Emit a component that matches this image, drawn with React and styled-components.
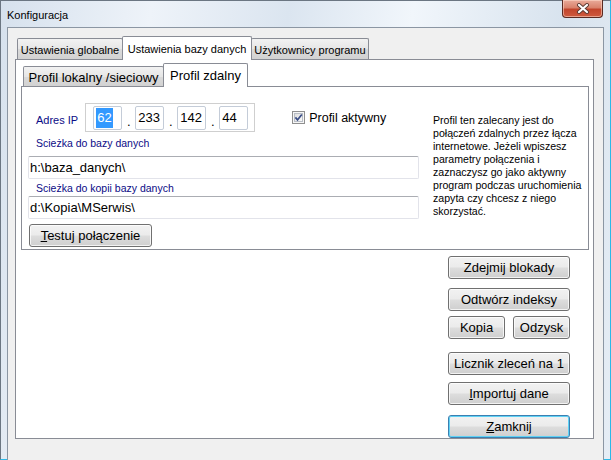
import React from "react";
import styled, { createGlobalStyle } from "styled-components";

const GlobalStyle = createGlobalStyle`
  html, body {
    margin: 0;
    padding: 0;
    width: 611px;
    height: 460px;
    overflow: hidden;
  }
  body {
    font-family: "Liberation Sans", Arial, sans-serif;
    color: #000;
  }
  * {
    box-sizing: border-box;
  }
`;

const Window = styled.div`
  width: 611px;
  height: 460px;
  display: flex;
  flex-direction: column;
  border: 1px solid #6b7682;
  border-right-color: #2bb9e8;
  border-bottom-color: #2bb9e8;
  background: linear-gradient(
    100deg,
    #d6e1ed 0%,
    #eef3f9 22%,
    #dbe5f0 42%,
    #f1f6fb 60%,
    #d8e3ee 82%,
    #e6edf5 100%
  );
`;

const TitleBar = styled.div`
  height: 26px;
  flex: none;
  display: flex;
  justify-content: space-between;
  align-items: flex-start;
  padding: 0 7px 0 6px;
`;

const Title = styled.span`
  font-size: 11px;
  line-height: 26px;
  margin-top: 1px;
`;

const CloseButton = styled.div`
  width: 41px;
  height: 18px;
  margin-top: -1px;
  border: 1px solid #5a2a22;
  border-top: none;
  border-radius: 0 0 4px 4px;
  background: linear-gradient(#e9ab9a 0%, #d9826c 45%, #c2452c 55%, #cf5a3e 100%);
  box-shadow: inset 0 0 0 1px rgba(255, 220, 205, 0.55);
  display: flex;
  align-items: center;
  justify-content: center;
`;

const Client = styled.div`
  flex: 1;
  margin: 0 6px 6px 6px;
  border: 1px solid #8b96a3;
  background: #f0f0f0;
  padding: 8px 9px 24px 7px;
  display: flex;
  flex-direction: column;
`;

const TabStrip = styled.div`
  height: 23px;
  flex: none;
  display: flex;
  align-items: flex-end;
  padding-left: 2px;
`;

const Tab = styled.div`
  position: relative;
  width: ${(p) => p.$w}px;
  height: ${(p) => (p.$active ? 24 : p.$h)}px;
  margin-left: ${(p) => (p.$first ? 0 : -1)}px;
  margin-bottom: ${(p) => (p.$active ? -1 : 0)}px;
  z-index: ${(p) => (p.$active ? 1 : 0)};
  border: 1px solid #898c95;
  border-bottom: none;
  border-radius: 2px 2px 0 0;
  background: ${(p) =>
    p.$active ? "#fff" : "linear-gradient(#f2f2f2 0%, #e6e6e6 50%, #dadada 52%, #d2d2d2 100%)"};
  display: flex;
  align-items: center;
  justify-content: center;
  padding-top: ${(p) => (p.$active ? 0 : 1)}px;
  font-size: ${(p) => p.$size}px;
  white-space: nowrap;
`;

const OuterPage = styled.div`
  flex: 1;
  border: 1px solid #898c95;
  background: #fff;
  padding: 3px 4px 0 5px;
  display: flex;
  flex-direction: column;
`;

const InnerPage = styled.div`
  border: 1px solid #898c95;
  background: #fff;
  padding: 16px 0 2px 6px;
  display: flex;
  align-items: flex-start;
`;

const LeftColumn = styled.div`
  width: 391px;
  flex: none;
  display: flex;
  flex-direction: column;
`;

const IpRow = styled.div`
  height: 29px;
  display: flex;
  align-items: center;
`;

const NavyLabel = styled.div`
  color: #0b0b86;
  font-size: ${(p) => p.$size || 11}px;
  line-height: 13px;
  height: 13px;
  margin-left: 8px;
  margin-top: ${(p) => p.$mt || 0}px;
  white-space: nowrap;
`;

const IpBox = styled.div`
  width: 170px;
  height: 29px;
  margin-left: 7px;
  border: 1px solid #cfcfcf;
  display: flex;
  align-items: center;
  padding-left: 7px;
`;

const IpField = styled.div`
  width: 29px;
  height: 24px;
  border: 1px solid #c4ccd8;
  border-radius: 2px;
  font-size: 13px;
  line-height: 22px;
  padding-left: 2px;
`;

const Selected = styled.span`
  display: inline-block;
  background: #3399ff;
  color: #fff;
  line-height: 20px;
  padding: 0 1px;
`;

const IpDot = styled.span`
  width: 13px;
  text-align: center;
  font-size: 13px;
  align-self: flex-end;
  line-height: 19px;
`;

const CheckLabel = styled.label`
  display: flex;
  align-items: center;
  gap: 4px;
  margin-left: 37px;
  font-size: 12.5px;
`;

const TextInput = styled.div`
  height: 23px;
  margin-top: ${(p) => p.$mt}px;
  border: 1px solid #e2e3ea;
  border-top-color: #abadb3;
  border-radius: 2px;
  font-size: 13px;
  line-height: 21px;
  padding-left: 1px;
  white-space: nowrap;
`;

const Button = styled.div`
  height: 23px;
  width: ${(p) => (p.$w ? `${p.$w}px` : "auto")};
  margin-top: ${(p) => p.$mt || 0}px;
  margin-left: ${(p) => p.$ml || 0}px;
  border: 1px solid ${(p) => (p.$focused ? "#3c7fb1" : "#707070")};
  border-radius: 3px;
  background: linear-gradient(#f2f2f2 0%, #ebebeb 48%, #dddddd 52%, #cfcfcf 100%);
  box-shadow: inset 0 0 0 1px ${(p) => (p.$focused ? "#5fd2f5" : "rgba(255, 255, 255, 0.75)")};
  font-size: 13px;
  line-height: 21px;
  text-align: center;
  white-space: nowrap;
  flex: none;
`;

const Description = styled.div`
  margin: 11px 0 0 14px;
  display: flex;
  flex-direction: column;
  align-items: flex-start;
  text-align: left;
`;

const DescLine = styled.div`
  font-size: 10.6px;
  line-height: 13px;
  white-space: nowrap;
`;

const ButtonColumn = styled.div`
  width: 122px;
  align-self: flex-end;
  margin: 6px 19px 0 0;
  display: flex;
  flex-direction: column;
`;

const ButtonPair = styled.div`
  display: flex;
  justify-content: space-between;
  margin-top: ${(p) => p.$mt}px;
`;

const descriptionLines = [
  "Profil ten zalecany jest do",
  "połączeń zdalnych przez łącza",
  "internetowe. Jeżeli wpiszesz",
  "parametry połączenia i",
  "zaznaczysz go jako aktywny",
  "program podczas uruchomienia",
  "zapyta czy chcesz z niego",
  "skorzystać.",
];

const CheckIcon = () => (
  <svg width="13" height="13" viewBox="0 0 13 13">
    <defs>
      <linearGradient id="cb" x1="0" y1="0" x2="1" y2="1">
        <stop offset="0" stopColor="#dcdcdc" />
        <stop offset="1" stopColor="#fbfbfb" />
      </linearGradient>
    </defs>
    <rect x="0.5" y="0.5" width="12" height="12" fill="#f6f6f6" stroke="#8f8f8f" />
    <rect x="2.5" y="2.5" width="8" height="8" fill="url(#cb)" stroke="#b9bec6" />
    <path d="M3.4 6.4 L5.5 8.9 L9.8 3.4" stroke="#3a4d86" strokeWidth="1.7" fill="none" />
  </svg>
);

const CloseIcon = () => (
  <svg width="14" height="11" viewBox="0 0 14 11">
    <path d="M3 2 L11 9 M11 2 L3 9" stroke="#5b3a33" strokeWidth="4" strokeLinecap="round" />
    <path d="M3 2 L11 9 M11 2 L3 9" stroke="#fff" strokeWidth="2.2" strokeLinecap="round" />
  </svg>
);

const App = () => {
  return (
    <>
      <GlobalStyle />
      <Window>
        <TitleBar>
          <Title>Konfiguracja</Title>
          <CloseButton>
            <CloseIcon />
          </CloseButton>
        </TitleBar>
        <Client>
          <TabStrip>
            <Tab $first $w={106} $h={21} $size={11}>
              Ustawienia globalne
            </Tab>
            <Tab $active $w={130} $size={11}>
              Ustawienia bazy danych
            </Tab>
            <Tab $w={118} $h={21} $size={11}>
              Użytkownicy programu
            </Tab>
          </TabStrip>
          <OuterPage>
            <TabStrip>
              <Tab $first $w={141} $h={20} $size={13}>
                Profil lokalny /sieciowy
              </Tab>
              <Tab $active $w={85} $size={13}>
                Profil zdalny
              </Tab>
            </TabStrip>
            <InnerPage>
              <LeftColumn>
                <IpRow>
                  <NavyLabel $size={11} $mt={6}>
                    Adres IP
                  </NavyLabel>
                  <IpBox>
                    <IpField>
                      <Selected>62</Selected>
                    </IpField>
                    <IpDot>.</IpDot>
                    <IpField>233</IpField>
                    <IpDot>.</IpDot>
                    <IpField>142</IpField>
                    <IpDot>.</IpDot>
                    <IpField>44</IpField>
                  </IpBox>
                  <CheckLabel>
                    <CheckIcon />
                    Profil aktywny
                  </CheckLabel>
                </IpRow>
                <NavyLabel $size={10.5} $mt={5}>
                  Scieżka do bazy danych
                </NavyLabel>
                <TextInput $mt={6}>h:\baza_danych\</TextInput>
                <NavyLabel $size={10.5} $mt={3}>
                  Scieżka do kopii bazy danych
                </NavyLabel>
                <TextInput $mt={1}>d:\Kopia\MSerwis\</TextInput>
                <Button $w={123} $mt={5} $ml={1}>
                  <u>T</u>estuj połączenie
                </Button>
              </LeftColumn>
              <Description>
                {descriptionLines.map((line, i) => (
                  <DescLine key={i}>{line}</DescLine>
                ))}
              </Description>
            </InnerPage>
            <ButtonColumn>
              <Button>Zdejmij blokady</Button>
              <Button $mt={9}>Odtwórz indeksy</Button>
              <ButtonPair $mt={5}>
                <Button $w={57}>Kopia</Button>
                <Button $w={57}>Odzysk</Button>
              </ButtonPair>
              <Button $mt={13}>Licznik zleceń na 1</Button>
              <Button $mt={7}>
                <u>I</u>mportuj dane
              </Button>
              <Button $mt={10} $focused>
                <u>Z</u>amknij
              </Button>
            </ButtonColumn>
          </OuterPage>
        </Client>
      </Window>
    </>
  );
};

export default App;
